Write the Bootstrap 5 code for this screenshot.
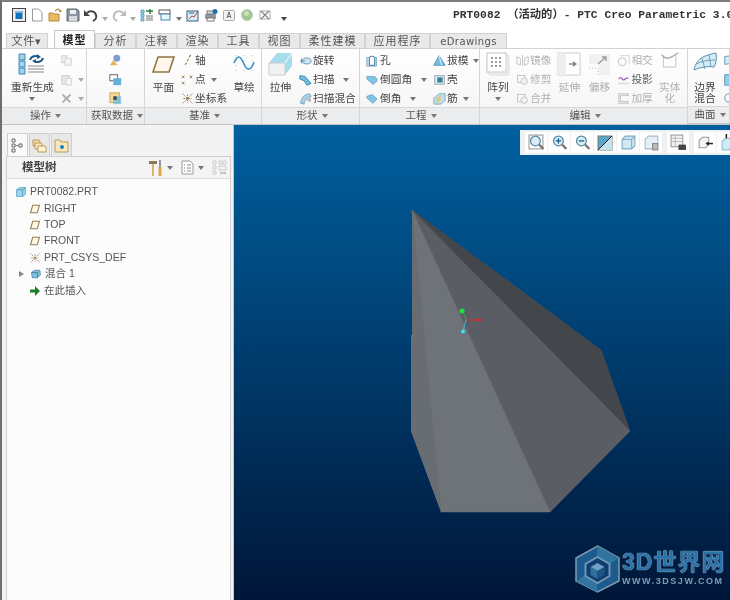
<!DOCTYPE html>
<html lang="zh-CN">
<head>
  <meta charset="UTF-8" />
  <meta name="viewport" content="width=device-width, initial-scale=1.0"/>
  <title>PRT0082 - PTC Creo Parametric 3.0</title>
  <link href="https://cdn.jsdelivr.net/npm/bootstrap@5.3.3/dist/css/bootstrap.min.css" rel="stylesheet">
  <style>
    html, body { height: 100%; overflow: hidden; }
    body {
      font-family: "Liberation Sans", "Noto Sans CJK SC", sans-serif;
      font-size: 12px;
      color: #444;
      background: #f3f3f3;
    }
    svg { display: block; flex: none; }
    .app-frame {
      width: 730px;
      height: 600px;
      display: flex;
      flex-direction: column;
      border-top: 2px solid #7d7d7d;
      border-left: 2px solid #6e6e6e;
      overflow: hidden;
      filter: blur(.3px);
    }

    /* title bar */
    .title-bar { height: 28px; padding: 6px 0 0 10px; background: #fff; flex: none; gap: 4px; }
    .qa-sep { width: 1px; height: 20px; margin: -3px -2px 0; background: #d5d5d5; }
    .caret-dn { width: 0; height: 0; border: 3px solid transparent; border-top: 4px solid #777; border-bottom: 0; flex: none; align-self: center; }
    .caret-lt { border-top-color: #aaa; }
    .doc-title {
      margin-left: 162px;
      font: bold 11.3px/14px "Liberation Mono", "Noto Sans CJK SC", monospace;
      color: #333;
      white-space: nowrap;
    }

    /* ribbon tabs */
    .rib-tabs { height: 18px; padding-left: 4px; border: 0; flex: none; flex-wrap: nowrap; background: #fff; align-items: flex-end; margin-bottom: 0; }
    .rib-tabs .nav-link {
      display: block;
      height: 15px;
      padding: 0;
      margin: 0;
      font-size: 11px;
      line-height: 15px;
      text-align: center;
      letter-spacing: 1px;
      color: #555;
      background: #e9e9e9;
      border: 1px solid #d2d2d2;
      border-bottom: 0;
      border-radius: 0;
    }
    .rib-tabs .nav-link.active { height: 18px; line-height: 18px; background: #fbfbfb; color: #222; border-color: #c6c6c6; font-weight: 700; }
    .tab-file { width: 42px; margin-right: 6px !important; }
    .tab-two { width: 41px; }
    .tab-four { width: 65px; }
    .tab-ed { width: 77px; font-family: "DejaVu Sans", sans-serif; font-size: 10px !important; letter-spacing: .4px !important; }

    /* ribbon */
    .rib-body { height: 77px; flex: none; background: #fafafa; border-top: 1px solid #d0d3d5; border-bottom: 2px solid #c4c7c9; }
    .rib-group { display: flex; flex-direction: column; border-right: 1px solid #d4d6d8; flex: none; }
    .rib-tools { height: 59px; display: flex; gap: 6px; padding-top: 3px; padding-left: 6px; background: linear-gradient(#fff, #f6f6f6); }
    .rib-label {
      height: 17px;
      display: flex;
      align-items: center;
      justify-content: center;
      gap: 4px;
      padding-left: 3px;
      font-size: 10.5px;
      color: #555;
      background: #eaecee;
      border-top: 1px solid #d6d8da;
    }
    .g-ops { width: 85px; }
    .g-ops .rib-tools { padding-left: 9px; }
    .g-data { width: 58px; }
    .g-data .rib-tools { padding-left: 0; justify-content: center; }
    .g-base { width: 117px; }
    .g-base .rib-tools { padding-left: 7px; }
    .g-shape { width: 98px; }
    .g-eng { width: 120px; }
    .g-edit { width: 208px; }
    .g-surf { width: 42px; }
    .g-surf .rib-tools { padding-left: 5px; overflow: hidden; }
    .big-tool { display: flex; flex-direction: column; align-items: center; line-height: 11px; font-size: 10.7px; flex: none; }
    .big-tool svg { margin-bottom: 6px; height: 24px; }
    .tool-col { display: flex; flex-direction: column; gap: 2px; flex: none; }
    .small-tool { height: 17px; display: flex; align-items: center; gap: 1px; font-size: 10.7px; white-space: nowrap; }
    .small-tool svg { width: 13px; height: 13px; }
    .is-off { color: #b0b0b0; }

    /* main area */
    .main-area { flex: 1; min-height: 0; }
    .side-pane { width: 232px; flex: none; padding: 8px 2px 0 4px; background: #f3f3f3; border-right: 1px solid #c5c5c5; }
    .pane-tabs { height: 23px; gap: 1px; padding-left: 1px; }
    .pane-tab { width: 21px; height: 23px; display: flex; align-items: center; justify-content: center; background: #e8e8e8; border: 1px solid #cfcfcf; border-bottom: 0; }
    .pane-tab.is-on { background: #fafafa; }
    .pane-box { height: 460px; border: 1px solid #cfcfcf; background: #fcfcfc; }
    .tree-head { height: 22px; padding: 0 3px 0 15px; background: #f4f4f4; border-bottom: 1px solid #dcdcdc; font-weight: 700; font-size: 11.5px; color: #444; }
    .tree-list { padding-top: 5px; }
    .tree-row {
      height: 16.4px;
      padding: 0;
      display: flex;
      align-items: center;
      gap: 3px;
      border: 0;
      font-size: 10.5px;
      color: #555;
      background: transparent;
      white-space: nowrap;
    }
    .lvl-0 { padding-left: 8px; }
    .lvl-1 { padding-left: 22px; }
    .lvl-exp { padding-left: 12px; }
    .tri-rt { width: 0; height: 0; border: 3px solid transparent; border-left: 5px solid #888; border-right: 0; margin-right: 3px; }

    /* graphics */
    .view-port { flex: 1; position: relative; overflow: hidden; background: linear-gradient(#00609f, #001638); }
    .geo-layer { position: absolute; left: 0; top: 0; }
    .view-bar { position: absolute; top: 5px; left: 286px; height: 25px; padding: 2px 0 2px 5px; gap: 1px; background: #eef1f3; width: 220px; }
    .view-btn { width: 22px; height: 21px; background: #fff; display: flex; align-items: center; justify-content: center; flex: none; }
    .wm-mark { position: absolute; left: 340px; top: 420px; gap: 1px; }
    .wm-name { font: 700 23px/20px "Liberation Sans", "Noto Sans CJK SC", sans-serif; letter-spacing: 1px; color: #2b72a8; text-shadow: 0 0 1px #a9bfce, 0 0 1px #a9bfce; white-space: nowrap; }
    .wm-url { font: 700 9px/9px "Liberation Sans", sans-serif; color: #7d9db5; letter-spacing: 1.55px; white-space: nowrap; margin-top: 5px; }
  </style>
</head>
<body>
  <svg width="0" height="0" style="position:absolute">
    <defs>
      <symbol id="ic-plane" viewBox="0 0 16 16"><path d="M5 3h9l-3 10H2z" fill="#fff8ea" stroke="#9a7d4d" stroke-width="1.4"/></symbol>
      <symbol id="ic-csys" viewBox="0 0 16 16"><path d="M2 2l12 12M14 2L2 14M8 3v10M3 8h10" stroke="#8a6d3d" stroke-width="1" stroke-dasharray="2 1" fill="none"/></symbol>
      <symbol id="ic-cube" viewBox="0 0 16 16"><path d="M2 5l4-3h8v9l-4 3H2z" fill="#9ed3ea" stroke="#5aa3c8"/><path d="M2 5h8v9M10 5l4-3" fill="none" stroke="#4a93b8"/></symbol>
      <symbol id="ic-mini" viewBox="0 0 16 16"><path d="M2 6l4-3h7l1 6-4 4H3z" fill="#7fbfdc" stroke="#4b86a8"/><path d="M2 6h8v7" fill="none" stroke="#38739a"/></symbol>
      <symbol id="ic-ghost" viewBox="0 0 16 16"><rect x="2" y="3" width="9" height="9" fill="none" stroke="#bbb"/><circle cx="10" cy="10" r="4" fill="#f3f3f3" stroke="#bbb"/></symbol>
      <symbol id="ic-zoom" viewBox="0 0 16 16"><circle cx="7" cy="6.5" r="4.6" fill="#d9edf7" stroke="#5b8aa3" stroke-width="1.2"/><path d="M10.5 10l4 4" stroke="#777" stroke-width="2"/></symbol>
    </defs>
  </svg>

  <div class="app-frame">
    <!-- quick access + title -->
    <div class="title-bar d-flex align-items-start">
      <svg width="14" height="14" viewBox="0 0 14 14"><rect x=".5" y=".5" width="13" height="13" fill="#eee" stroke="#444"/><rect x="3.500" y="3" width="7" height="8" fill="#1272b8"/><rect x="3.500" y="3" width="7" height="2" fill="#7fb8e0"/></svg>
      <span class="qa-sep"></span>
      <svg width="14" height="14" viewBox="0 0 14 14"><path d="M2.500 1h6l3.500 3.500V13h-9.500z" fill="#fff" stroke="#999"/></svg>
      <svg width="14" height="14" viewBox="0 0 14 14"><path d="M1 5h4l1 1h5v7H1z" fill="#e9b863" stroke="#b78a3c"/><path d="M7 3l3-2 3 2-2 .5" fill="none" stroke="#c0872c" stroke-width="1.300"/></svg>
      <svg width="14" height="14" viewBox="0 0 14 14"><path d="M1 1h10l2 2v10H1z" fill="#8a96a3" stroke="#5e6873"/><rect x="4" y="2" width="6" height="4" fill="#eee"/><rect x="3" y="8" width="8" height="5" fill="#d5d9dd"/></svg>
      <svg width="14" height="14" viewBox="0 0 14 14"><path d="M3 5c3-3 8-2 9 2s-1 5-3 6" fill="none" stroke="#444" stroke-width="2"/><path d="M0 2v6h6z" fill="#444"/></svg>
      <span class="caret-dn caret-lt"></span>
      <svg width="14" height="14" viewBox="0 0 14 14"><path d="M11 5C8 2 3 3 2 7s1 5 3 6" fill="none" stroke="#bbb" stroke-width="2"/><path d="M14 2v6H8z" fill="#bbb"/></svg>
      <span class="caret-dn caret-lt"></span>
      <svg width="14" height="14" viewBox="0 0 14 14"><path d="M1 2h3v3H1zM1 6h3v3H1zM1 10h3v3H1z" fill="#9ed3ea" stroke="#3e88b5" stroke-width=".7"/><path d="M6 8h7M6 10h7M6 12h7" stroke="#777"/><path d="M6 3h7M10 1v5" stroke="#2a7a3a" stroke-width="1.400"/></svg>
      <svg width="14" height="14" viewBox="0 0 14 14"><rect x="1" y="2" width="11" height="4" fill="#fff" stroke="#555"/><rect x="3" y="6" width="9" height="6" fill="#eaf5fb" stroke="#3e88b5"/></svg>
      <span class="caret-dn"></span>
      <svg width="14" height="14" viewBox="0 0 14 14"><rect x="1" y="3" width="11" height="10" fill="#d8edf7" stroke="#35607c"/><path d="M3 11l3-3 2 1 4-6" fill="none" stroke="#c04040"/><path d="M3 5h5" stroke="#35607c"/></svg>
      <svg width="14" height="14" viewBox="0 0 14 14"><rect x="1" y="6" width="11" height="5" rx="1" fill="#8e98a3"/><rect x="3" y="3" width="7" height="3" fill="#ddd" stroke="#777"/><rect x="3" y="10" width="7" height="3" fill="#fff" stroke="#777"/><circle cx="11" cy="3.500" r="2.500" fill="#1e6fa8"/></svg>
      <svg width="14" height="14" viewBox="0 0 14 14"><rect x="1.500" y="2.500" width="11" height="10" rx="1" fill="#f3f3f3" stroke="#aaa"/><path d="M5 10l2-6 2 6M5.800 8.500h2.400" fill="none" stroke="#666"/></svg>
      <svg width="14" height="14" viewBox="0 0 14 14"><circle cx="7" cy="7" r="5.500" fill="#9fc98f" stroke="#c5c5c5"/><circle cx="6.500" cy="5.500" r="2.500" fill="#c7e4b8"/></svg>
      <svg width="14" height="14" viewBox="0 0 14 14"><rect x="2" y="3" width="10" height="8" fill="none" stroke="#aaa"/><path d="M3 3l8 8M11 3l-8 8" stroke="#888" stroke-width="1.300"/></svg>
      <span class="qa-sep"></span>
      <span class="caret-dn" style="border-top-color:#444;margin-left:5px"></span>
      <div class="doc-title">PRT0082 （活动的）- PTC Creo Parametric 3.0</div>
    </div>

    <!-- ribbon tabs -->
    <ul class="nav nav-tabs rib-tabs">
      <li class="nav-item"><a class="nav-link tab-file" href="#">文件▾</a></li>
      <li class="nav-item"><a class="nav-link tab-two active" href="#">模型</a></li>
      <li class="nav-item"><a class="nav-link tab-two" href="#">分析</a></li>
      <li class="nav-item"><a class="nav-link tab-two" href="#">注释</a></li>
      <li class="nav-item"><a class="nav-link tab-two" href="#">渲染</a></li>
      <li class="nav-item"><a class="nav-link tab-two" href="#">工具</a></li>
      <li class="nav-item"><a class="nav-link tab-two" href="#">视图</a></li>
      <li class="nav-item"><a class="nav-link tab-four" href="#">柔性建模</a></li>
      <li class="nav-item"><a class="nav-link tab-four" href="#">应用程序</a></li>
      <li class="nav-item"><a class="nav-link tab-ed" href="#">eDrawings</a></li>
    </ul>

    <!-- ribbon -->
    <div class="rib-body d-flex">
      <div class="rib-group g-ops">
        <div class="rib-tools">
          <div class="big-tool">
            <svg width="28" height="24" viewBox="0 0 28 24"><path d="M1 2h6v6H1zM1 9h6v6H1zM1 16h6v6H1z" fill="#9ed3ea" stroke="#3e88b5"/><path d="M10 14h16M10 17h16M10 20h16" stroke="#888"/><path d="M12 8c1-4 6-5 9-3M25 6c-1 4-6 5-9 3" fill="none" stroke="#1c5a8c" stroke-width="2"/><path d="M19 2l4 3-4 2zM18 7l-4 2 4 2z" fill="#1c5a8c"/></svg>
            <span>重新生成</span>
            <span class="caret-dn mt-1"></span>
          </div>
          <div class="tool-col">
            <div class="small-tool"><svg viewBox="0 0 15 15"><path d="M2 2h6v8H2z" fill="#eee" stroke="#ccc"/><path d="M6 5h7v8H6z" fill="#f6f6f6" stroke="#ccc"/></svg></div>
            <div class="small-tool"><svg viewBox="0 0 15 15"><path d="M2 3h9v10H2z" fill="#ece7dc" stroke="#ccc"/><path d="M7 6h6v8H7z" fill="#f6f6f6" stroke="#ccc"/></svg><span class="caret-dn caret-lt ms-1"></span></div>
            <div class="small-tool"><svg viewBox="0 0 15 15"><path d="M3 3l9 9M12 3l-9 9" stroke="#aaa" stroke-width="2"/></svg><span class="caret-dn caret-lt ms-1"></span></div>
          </div>
        </div>
        <div class="rib-label">操作<span class="caret-dn"></span></div>
      </div>

      <div class="rib-group g-data">
        <div class="rib-tools">
          <div class="tool-col">
            <div class="small-tool"><svg viewBox="0 0 15 15"><circle cx="9" cy="5" r="4" fill="#7d9fd0"/><path d="M1 13l4-6 5 6z" fill="#e3b75f"/></svg></div>
            <div class="small-tool"><svg viewBox="0 0 15 15"><rect x="1" y="2" width="9" height="7" fill="#fff" stroke="#556"/><rect x="5" y="6" width="9" height="8" fill="#5fb0d8"/></svg></div>
            <div class="small-tool"><svg viewBox="0 0 15 15"><rect x="1" y="1" width="11" height="11" fill="#f2d98f" stroke="#c9a64b"/><rect x="5" y="5" width="9" height="9" fill="#71bde0" fill-opacity=".8"/><rect x="5" y="5" width="4" height="4" fill="#445"/></svg></div>
          </div>
        </div>
        <div class="rib-label">获取数据<span class="caret-dn"></span></div>
      </div>

      <div class="rib-group g-base">
        <div class="rib-tools">
          <div class="big-tool pt-1">
            <svg width="23" height="17" viewBox="0 0 23 17" style="height:17px;margin-bottom:9px"><path d="M6 1h16l-5 15H1z" fill="#fff8ea" stroke="#8f7444" stroke-width="1.600"/></svg>
            <span>平面</span>
          </div>
          <div class="tool-col">
            <div class="small-tool"><svg viewBox="0 0 15 15"><path d="M11 1L4 14" stroke="#8f7444" stroke-width="1.300" stroke-dasharray="3 2"/></svg>轴</div>
            <div class="small-tool"><svg viewBox="0 0 15 15"><path d="M1 3l3 3M4 3L1 6M10 3l3 3M13 3l-3 3M1 10l3 3M4 10l-3 3" stroke="#8f7444"/></svg>点<span class="caret-dn ms-1"></span></div>
            <div class="small-tool"><svg viewBox="0 0 15 15"><use href="#ic-csys"/></svg>坐标系</div>
          </div>
          <div class="big-tool">
            <svg width="22" height="24" viewBox="0 0 22 24"><path d="M3 3v17M11 3v17M19 3v17" stroke="#bbb" stroke-dasharray="1 4"/><path d="M1 11c4-10 7-6 10 1s7 7 10-2" fill="none" stroke="#2f8fc4" stroke-width="1.500"/></svg>
            <span>草绘</span>
          </div>
        </div>
        <div class="rib-label">基准<span class="caret-dn"></span></div>
      </div>

      <div class="rib-group g-shape">
        <div class="rib-tools">
          <div class="big-tool">
            <svg width="25" height="24" viewBox="0 0 25 24"><path d="M1 11l8-10h15v13l-7 9H1z" fill="#a7dced"/><path d="M1 11h16v12H1z" fill="#f1f1f1" stroke="#ccc"/><path d="M17 11l7-10" stroke="#fff"/></svg>
            <span>拉伸</span>
          </div>
          <div class="tool-col">
            <div class="small-tool"><svg viewBox="0 0 15 15"><ellipse cx="9" cy="8" rx="5" ry="3.500" fill="#cfe6f2" stroke="#5b8fad"/><path d="M1 8h6M3 5v6" stroke="#5b8fad"/></svg>旋转</div>
            <div class="small-tool"><svg viewBox="0 0 15 15"><path d="M1 3l6 1 7 8-5 2-3-5-5-2z" fill="#6fbfe0" stroke="#357fa8"/></svg>扫描<span class="caret-dn ms-2"></span></div>
            <div class="small-tool"><svg viewBox="0 0 15 15"><path d="M2 13C2 7 6 3 12 2l2 3C9 6 6 9 6 14z" fill="#a9d4ea" stroke="#6d9fbd"/><path d="M9 9l4-2v4z" fill="#ddd" stroke="#999"/></svg>扫描混合</div>
          </div>
        </div>
        <div class="rib-label">形状<span class="caret-dn"></span></div>
      </div>

      <div class="rib-group g-eng">
        <div class="rib-tools">
          <div class="tool-col">
            <div class="small-tool"><svg viewBox="0 0 15 15"><path d="M1 4h11v10H1z" fill="#bfe0f0" stroke="#6fa7c6"/><ellipse cx="7" cy="4.500" rx="3" ry="2" fill="#fff" stroke="#2f6f96"/><path d="M4 5v8h6V5" fill="#fff" stroke="#2f6f96"/></svg>孔</div>
            <div class="small-tool"><svg viewBox="0 0 15 15"><path d="M1 4h7c3 0 5 2 5 5L8 13 1 7z" fill="#7fc6e4" stroke="#6fa7c6"/><path d="M8 13l5-4v1l-5 4z" fill="#bbb"/></svg>倒圆角<span class="caret-dn ms-2"></span></div>
            <div class="small-tool"><svg viewBox="0 0 15 15"><path d="M1 5l6-2 6 5-5 5-7-6z" fill="#7fc6e4" stroke="#6fa7c6"/></svg>倒角<span class="caret-dn ms-2"></span></div>
          </div>
          <div class="tool-col">
            <div class="small-tool"><svg viewBox="0 0 15 15"><path d="M1 13l6-11 7 11z" fill="#79bfe0" stroke="#4b8cb0"/><path d="M7 2l3 11" stroke="#fff"/></svg>拔模<span class="caret-dn ms-1"></span></div>
            <div class="small-tool"><svg viewBox="0 0 15 15"><rect x="2" y="3" width="11" height="10" fill="#dbe5ea" stroke="#99a7b0"/><rect x="5" y="5" width="6" height="6" fill="#3c7fa6"/></svg>壳</div>
            <div class="small-tool"><svg viewBox="0 0 15 15"><path d="M1 7l6-5h7v8l-5 4H1z" fill="#bfe0f0" stroke="#7fa9c0"/><path d="M4 13V7l5-4v7z" fill="#d9c98f"/></svg>筋<span class="caret-dn ms-1"></span></div>
          </div>
        </div>
        <div class="rib-label">工程<span class="caret-dn"></span></div>
      </div>

      <div class="rib-group g-edit">
        <div class="rib-tools">
          <div class="big-tool">
            <svg width="24" height="24" viewBox="0 0 24 24"><path d="M1 1h19l3 3v19H4l-3-3z" fill="#eee" stroke="#ddd"/><rect x="1" y="1" width="19" height="19" fill="#fff" stroke="#ccc"/><path d="M5 6h2M9 6h2M13 6h2M5 10h2M9 10h2M13 10h2M5 14h2M9 14h2M13 14h2" stroke="#999" stroke-width="2"/></svg>
            <span>阵列</span>
            <span class="caret-dn mt-1"></span>
          </div>
          <div class="tool-col is-off">
            <div class="small-tool"><svg viewBox="0 0 15 15"><path d="M1 3l4 2v8l-4-2zM14 3l-4 2v8l4-2zM7.500 1v13" fill="none" stroke="#bbb"/></svg>镜像</div>
            <div class="small-tool"><svg viewBox="0 0 15 15"><use href="#ic-ghost"/></svg>修剪</div>
            <div class="small-tool"><svg viewBox="0 0 15 15"><use href="#ic-ghost"/></svg>合并</div>
          </div>
          <div class="big-tool is-off">
            <svg width="24" height="24" viewBox="0 0 24 24"><rect x="1" y="1" width="22" height="22" fill="#fff" stroke="#ccc"/><rect x="1" y="1" width="8" height="22" fill="#eee"/><path d="M12 12h6" stroke="#888" stroke-width="1.500"/><path d="M16 9l4 3-4 3z" fill="#888"/></svg>
            <span>延伸</span>
          </div>
          <div class="big-tool is-off">
            <svg width="24" height="24" viewBox="0 0 24 24"><path d="M2 2h21v21H12V12H2z" fill="#f1f1f1"/><path d="M11 12l8-7M15 5h4v4" fill="none" stroke="#999" stroke-width="1.300"/><path d="M2 16h9M11 16v7" stroke="#bbb" stroke-dasharray="1 2"/></svg>
            <span>偏移</span>
          </div>
          <div class="tool-col is-off">
            <div class="small-tool"><svg viewBox="0 0 15 15"><circle cx="6" cy="9" r="4.500" fill="none" stroke="#bbb"/><path d="M4 2h10v10" fill="none" stroke="#ccc"/></svg>相交</div>
            <div class="small-tool text-body-secondary"><svg viewBox="0 0 15 15"><path d="M1 11h13v2H1z" fill="#ddd"/><path d="M2 7c3-5 4 2 6 1s2-3 5-2" fill="none" stroke="#8a4bb5" stroke-width="1.300"/></svg>投影</div>
            <div class="small-tool"><svg viewBox="0 0 15 15"><path d="M2 2h11v2H4v7h9v2H2z" fill="#f3f3f3" stroke="#bbb"/></svg>加厚</div>
          </div>
          <div class="big-tool is-off">
            <svg width="22" height="24" viewBox="0 0 22 24" style="height:20px;margin-bottom:10px"><path d="M3 5v13h15V3" fill="none" stroke="#bbb"/><path d="M1 3c6 8 11 4 20-2" fill="none" stroke="#9aa" stroke-width="1.500"/></svg>
            <span>实体</span>
            <span>化</span>
          </div>
        </div>
        <div class="rib-label">编辑<span class="caret-dn"></span></div>
      </div>

      <div class="rib-group g-surf">
        <div class="rib-tools">
          <div class="big-tool">
            <svg width="24" height="20" viewBox="0 0 24 20" style="height:20px;margin-bottom:10px"><path d="M1 18C3 9 7 4 23 1c1 5 0 11-2 14-6-1-13 0-20 3z" fill="#d4ecf6" stroke="#5b8fad"/><path d="M9 6l3 11M16 3l2 12M3 12c6-3 12-4 19-4" fill="none" stroke="#5b8fad" stroke-width=".8"/></svg>
            <span>边界</span>
            <span>混合</span>
          </div>
          <div class="tool-col">
            <div class="small-tool"><svg viewBox="0 0 15 15"><path d="M2 12V3l12-2v9z" fill="#d4ecf6" stroke="#5b8fad"/></svg></div>
            <div class="small-tool"><svg viewBox="0 0 15 15"><rect x="2" y="2" width="12" height="12" fill="#8fd0ea" stroke="#5b8fad"/></svg></div>
            <div class="small-tool"><svg viewBox="0 0 15 15"><circle cx="7" cy="8" r="5" fill="none" stroke="#5b8fad"/></svg></div>
          </div>
        </div>
        <div class="rib-label">曲面<span class="caret-dn"></span></div>
      </div>
    </div>

    <!-- tree + graphics -->
    <div class="main-area d-flex">
      <aside class="side-pane">
        <div class="pane-tabs d-flex">
          <div class="pane-tab is-on"><svg width="13" height="15" viewBox="0 0 13 15"><path d="M1 1h3v3H1zM1 6h3v3H1zM1 11h3v3H1zM8 6h3v3H8z" fill="none" stroke="#666"/><path d="M4 7.500h4" stroke="#888"/></svg></div>
          <div class="pane-tab"><svg width="15" height="15" viewBox="0 0 15 15"><path d="M1 2h6l1 1v5H1z" fill="#f3dca6" stroke="#b99a55"/><path d="M3 5h6l1 1v5H3z" fill="#f7e6bb" stroke="#b99a55"/><path d="M6 8h7l1 1v5H6z" fill="#fff3d3" stroke="#b99a55"/></svg></div>
          <div class="pane-tab"><svg width="15" height="15" viewBox="0 0 15 15"><path d="M1 2h5l1 2h7v10H1z" fill="#f9e9bf" stroke="#b99a55"/><circle cx="8" cy="9" r="2" fill="#1e7fb5"/></svg></div>
        </div>
        <div class="pane-box">
          <div class="tree-head d-flex align-items-center">
            <span class="flex-grow-1">模型树</span>
            <svg width="15" height="18" viewBox="0 0 15 18"><path d="M1 2h8v3H1z" fill="#8a7a5a"/><path d="M4 5h2v12H4z" fill="#d8b56a"/><path d="M11 1h2v7h-2z" fill="#999"/><path d="M10.500 8h3v9h-3z" fill="#d9a94a"/></svg>
            <span class="caret-dn ms-1 me-2"></span>
            <svg width="13" height="15" viewBox="0 0 13 15"><path d="M1 1h8l3 3v10H1z" fill="#fff" stroke="#999"/><path d="M3 5h1M6 5h4M3 8h1M6 8h4M3 11h1M6 11h4" stroke="#888"/></svg>
            <span class="caret-dn ms-1 me-2"></span>
            <svg width="15" height="15" viewBox="0 0 15 15"><path d="M1 1h3v3H1zM1 6h3v3H1zM1 11h3v3H1zM7 1h3v3H7zM11 1h3v3h-3zM7 6h7v4H7z" fill="none" stroke="#ccc"/><path d="M8 12l6 2M8 14l6-2" stroke="#bbb"/></svg>
          </div>
          <div class="list-group list-group-flush tree-list">
            <div class="list-group-item tree-row lvl-0"><svg width="12" height="12" viewBox="0 0 16 16"><use href="#ic-cube"/></svg>PRT0082.PRT</div>
            <div class="list-group-item tree-row lvl-1"><svg width="12" height="12" viewBox="0 0 16 16"><use href="#ic-plane"/></svg>RIGHT</div>
            <div class="list-group-item tree-row lvl-1"><svg width="12" height="12" viewBox="0 0 16 16"><use href="#ic-plane"/></svg>TOP</div>
            <div class="list-group-item tree-row lvl-1"><svg width="12" height="12" viewBox="0 0 16 16"><use href="#ic-plane"/></svg>FRONT</div>
            <div class="list-group-item tree-row lvl-1"><svg width="12" height="12" viewBox="0 0 16 16"><use href="#ic-csys"/></svg>PRT_CSYS_DEF</div>
            <div class="list-group-item tree-row lvl-exp"><span class="tri-rt"></span><svg width="12" height="12" viewBox="0 0 16 16"><use href="#ic-mini"/></svg><span>混合 1</span></div>
            <div class="list-group-item tree-row lvl-1"><svg width="12" height="12" viewBox="0 0 12 12"><path d="M1 4.500h5V1l5 5-5 5V7.500H1z" fill="#1d7f25"/></svg>在此插入</div>
          </div>
        </div>
      </aside>

      <main class="view-port">
        <!-- part geometry, coordinates are the model silhouette in this canvas -->
        <svg class="geo-layer" width="496" height="474" viewBox="234 126 496 474">
          <path d="M412 211L601 351 630 432 550 513H441L411 432V336H412z" fill="#62656b"/>
          <path d="M412 211L601 351 630 432z" fill="#43464b" stroke="#43464b" stroke-width=".5"/>
          <path d="M412 211L630 432 550 513z" fill="#5a5d64" stroke="#5a5d64" stroke-width=".5"/>
          <path d="M412 211L550 513H441z" fill="#6e7279" stroke="#6e7279" stroke-width=".5"/>
          <path d="M412 211V336H411V432L441 513z" fill="#686c73"/>
          <path d="M466 321h13" stroke="#d03030"/><circle cx="479.500" cy="321" r="1.800" fill="#e83030"/>
          <path d="M466 321c0-3-2-6-4-9" fill="none" stroke="#30b050" stroke-width="1"/><circle cx="462" cy="312" r="2.500" fill="#20e040"/>
          <path d="M466 321l-3 11" stroke="#30c0d0"/><circle cx="463" cy="332.500" r="2" fill="#30e8f0"/>
        </svg>

        <div class="view-bar d-flex">
          <div class="view-btn"><svg width="17" height="17" viewBox="0 0 16 16"><rect x="1" y="1" width="13" height="13" fill="none" stroke="#999"/><use href="#ic-zoom"/></svg></div>
          <div class="view-btn"><svg width="17" height="17" viewBox="0 0 16 16"><use href="#ic-zoom"/><path d="M4.500 6.500h5M7 4v5" stroke="#14618f" stroke-width="1.200"/></svg></div>
          <div class="view-btn"><svg width="17" height="17" viewBox="0 0 16 16"><use href="#ic-zoom"/><path d="M4.500 6.500h5" stroke="#14618f" stroke-width="1.200"/></svg></div>
          <div class="view-btn"><svg width="16" height="16" viewBox="0 0 16 16"><rect x="1" y="1" width="14" height="14" fill="#5aa6c8" stroke="#777"/><path d="M1 15L15 1v14z" fill="#c3e2ee"/><path d="M1 15L15 1" stroke="#222"/></svg></div>
          <div class="view-btn"><svg width="17" height="17" viewBox="0 0 16 16"><path d="M2 5l3-3h9v9l-3 3H2z" fill="#cfe9f5" stroke="#7fa9c0"/><path d="M2 5h9v9M11 5l3-3" fill="none" stroke="#7fa9c0"/></svg></div>
          <div class="view-btn"><svg width="17" height="17" viewBox="0 0 16 16"><path d="M2 5l3-3h9v7H9v5H2z" fill="#e3f1f7" stroke="#a5bcc9"/><rect x="9" y="9" width="5" height="6" fill="#bbb" stroke="#888"/></svg></div>
          <div class="view-btn ms-1"><svg width="17" height="17" viewBox="0 0 16 16"><rect x="1" y="1" width="11" height="11" fill="#f4f4f4" stroke="#999"/><path d="M1 4h11M1 7h11M5 1v11" stroke="#bbb"/><rect x="8" y="10" width="7" height="5" fill="#444"/></svg></div>
          <div class="view-btn ms-1"><svg width="17" height="17" viewBox="0 0 16 16"><path d="M2 6l3-3h6v7l-3 3H2z" fill="#f4f4f4" stroke="#999"/><path d="M9 9h6" stroke="#222" stroke-width="1.400"/><path d="M8 9l3-2v4z" fill="#222"/></svg></div>
          <div class="view-btn"><svg width="17" height="17" viewBox="0 0 16 16"><path d="M2 7l3-3h6v8l-3 3H2z" fill="#c9ecf8" stroke="#8fb9cc"/><path d="M6 0v4M12 8h4" stroke="#222" stroke-width="1.400"/></svg></div>
        </div>

        <div class="wm-mark d-flex align-items-center">
          <svg width="47" height="48" viewBox="0 0 47 48">
            <path d="M23.500 1L45 13v23L23.500 47 2 36V13z" fill="#1d5a8d" stroke="#7f9cb2" stroke-width="1.500"/>
            <path d="M23.500 1L45 13 34 20 23 13zM2 36l11-7 10 6v12z" fill="#30749f"/>
            <path d="M23.500 12l12 7v12l-12 7-12-7V19z" fill="#0f3e6e" stroke="#6f96b4" stroke-width="2"/>
            <path d="M23.500 18l7 4-7 4-7-4z" fill="#6f9fc2"/><path d="M16.500 22l7 4v8l-7-4z" fill="#336f9e"/><path d="M30.500 22l-7 4v8l7-4z" fill="#1c5585"/>
          </svg>
          <div>
            <div class="wm-name">3D世界网</div>
            <div class="wm-url">WWW.3DSJW.COM</div>
          </div>
        </div>
      </main>
    </div>
  </div>

  <script src="https://cdn.jsdelivr.net/npm/bootstrap@5.3.3/dist/js/bootstrap.bundle.min.js"></script>
</body>
</html>
